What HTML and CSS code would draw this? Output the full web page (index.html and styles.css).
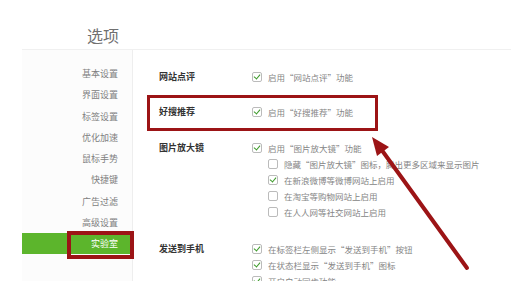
FILE: index.html
```html
<!DOCTYPE html>
<html lang="zh-CN">
<head>
    <meta charset="UTF-8">
    <meta name="viewport" content="width=device-width, initial-scale=1.0">
    <title>选项</title>
    <link rel="stylesheet" href="styles.css">
</head>
<body>
    <div class="page">
        <div class="header"><h1>选项</h1></div>
        <div class="main">
            <ul class="sidebar">
                <li>基本设置</li>
                <li>界面设置</li>
                <li>标签设置</li>
                <li>优化加速</li>
                <li>鼠标手势</li>
                <li>快捷键</li>
                <li>广告过滤</li>
                <li>高级设置</li>
                <li class="active">实验室</li>
            </ul>
            <div class="content">
                <div class="section">
                    <div class="label">网站点评</div>
                    <div class="options">
                        <div class="opt"><span class="box on"></span>启用“网站点评”功能</div>
                    </div>
                </div>
                <div class="section">
                    <div class="label">好搜推荐</div>
                    <div class="options">
                        <div class="opt"><span class="box on"></span>启用“好搜推荐”功能</div>
                    </div>
                </div>
                <div class="section">
                    <div class="label">图片放大镜</div>
                    <div class="options">
                        <div class="opt"><span class="box on"></span>启用“图片放大镜”功能</div>
                        <div class="opt sub"><span class="box"></span>隐藏“图片放大镜”图标，腾出更多区域来显示图片</div>
                        <div class="opt sub"><span class="box on"></span>在新浪微博等微博网站上启用</div>
                        <div class="opt sub"><span class="box"></span>在淘宝等购物网站上启用</div>
                        <div class="opt sub"><span class="box"></span>在人人网等社交网站上启用</div>
                    </div>
                </div>
                <div class="section">
                    <div class="label">发送到手机</div>
                    <div class="options">
                        <div class="opt"><span class="box on"></span>在标签栏左侧显示“发送到手机”按钮</div>
                        <div class="opt"><span class="box on"></span>在状态栏显示“发送到手机”图标</div>
                        <div class="opt"><span class="box on"></span>开启自动同步功能</div>
                    </div>
                </div>
            </div>
        </div>
    </div>

    <!-- annotations drawn over the screenshot -->
    <div class="mark mark-row"></div>
    <div class="mark mark-lab"></div>
    <svg class="arrow" width="511" height="281" viewBox="0 0 511 281">
        <line x1="467" y1="268" x2="381" y2="149" stroke="#9c1416" stroke-width="4" stroke-linecap="round"/>
        <polygon points="372,137 389,147 377,156" fill="#9c1416"/>
    </svg>
</body>
</html>
```

FILE: styles.css
```css
html, body {
    margin: 0;
    padding: 0;
    background: #fff;
    overflow: hidden;
}

body {
    width: 511px;
    height: 281px;
    position: relative;
    font-family: "Noto Sans CJK SC", "Noto Sans", sans-serif;
    color: #555;
}

.page {
    margin-left: 22px;
}

.header {
    height: 50px;
    border-bottom: 1px solid #f0f0f0;
    box-sizing: border-box;
    padding-left: 65px;
}

.header h1 {
    margin: 0;
    padding-top: 24px;
    font-size: 16px;
    line-height: 22px;
    font-weight: normal;
    color: #707070;
}

.main {
    display: flex;
}

.sidebar {
    list-style: none;
    margin: 0;
    padding: 13px 0 30px 0;
    width: 111px;
    background: #fcfcfc;
    border-right: 1px solid #eee;
    box-sizing: border-box;
}

.sidebar li {
    height: 21.25px;
    line-height: 21.25px;
    text-align: right;
    padding-right: 14px;
    font-size: 9px;
    color: #808080;
}

.sidebar li.active {
    background: #5cb52c;
    color: #fff;
}

.content {
    flex: 1;
    padding: 19px 0 0 26px;
}

.section {
    display: flex;
    margin-bottom: 19px;
}

.section:nth-child(2) {
    margin-bottom: 20px;
}

.section:nth-child(3) {
    margin-bottom: 21px;
}

.label {
    width: 93px;
    font-size: 9px;
    line-height: 16px;
    font-weight: bold;
    color: #333;
}

.opt {
    display: flex;
    align-items: center;
    height: 16px;
    font-size: 8.5px;
    color: #858585;
    white-space: nowrap;
}

.opt.sub {
    padding-left: 16px;
}

.box {
    width: 8px;
    height: 8px;
    border: 1px solid #bbb;
    border-radius: 2px;
    margin-right: 6px;
    position: relative;
    flex-shrink: 0;
}

.box.on::after {
    content: "";
    position: absolute;
    left: 2px;
    top: 0;
    width: 3px;
    height: 5px;
    border-right: 1.5px solid #3d9a2a;
    border-bottom: 1.5px solid #3d9a2a;
    transform: rotate(40deg);
}

.mark {
    position: absolute;
    border: 3px solid #9c1416;
    box-sizing: border-box;
}

.mark-row {
    left: 147px;
    top: 95px;
    width: 231px;
    height: 36px;
}

.mark-lab {
    left: 67px;
    top: 231px;
    width: 67px;
    height: 28px;
    border-width: 4px;
}

.arrow {
    position: absolute;
    left: 0;
    top: 0;
}
```
